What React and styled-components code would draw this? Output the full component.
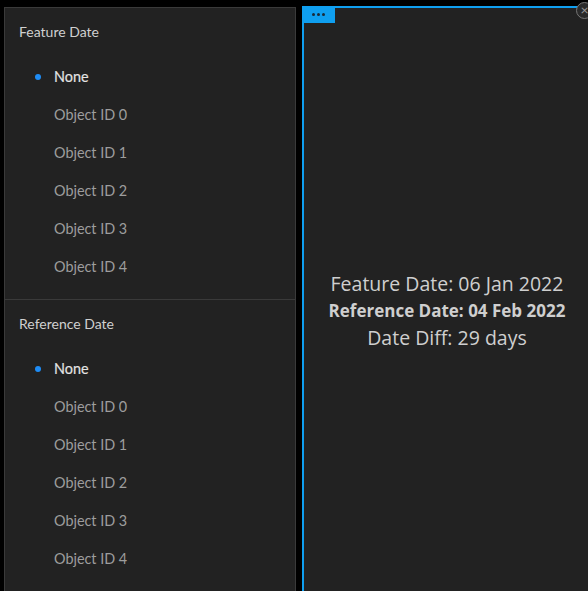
import React from 'react';
import styled, { createGlobalStyle } from 'styled-components';

const options = ['None', 'Object ID 0', 'Object ID 1', 'Object ID 2', 'Object ID 3', 'Object ID 4'];

const sections = [
  { title: 'Feature Date', selected: 'None' },
  { title: 'Reference Date', selected: 'None' },
];

export default function App() {
  return (
    <>
      <GlobalStyle />
      <Page>
        <SettingsPanel>
          {sections.map((section, i) => (
            <Section key={section.title} divided={i > 0}>
              <SectionTitle>{section.title}</SectionTitle>
              <OptionList>
                {options.map(opt => (
                  <Option key={opt} active={opt === section.selected}>
                    {opt}
                  </Option>
                ))}
              </OptionList>
            </Section>
          ))}
        </SettingsPanel>
        <Widget>
          <WidgetTab>
            <Dot />
            <Dot />
            <Dot />
          </WidgetTab>
          <CloseButton>×</CloseButton>
          <Summary>
            <Line>Feature Date: 06 Jan 2022</Line>
            <Line bold>Reference Date: 04 Feb 2022</Line>
            <Line>Date Diff: 29 days</Line>
          </Summary>
        </Widget>
      </Page>
    </>
  );
}

const GlobalStyle = createGlobalStyle`
  html, body {
    margin: 0;
    padding: 0;
    background: #000;
    overflow: hidden;
    font-family: Lato, "Open Sans", sans-serif;
  }
`;

const Page = styled.div`
  display: flex;
  align-items: flex-start;
  gap: 6px;
  padding-left: 4px;
  width: 600px;
  height: 591px;
  overflow: hidden;
`;

const SettingsPanel = styled.div`
  width: 290px;
  height: 640px;
  margin-top: 7px;
  background: #222;
  border: 1px solid #3a3a3a;
  flex-shrink: 0;
`;

const Section = styled.div`
  padding: 14px 14px 13px;
  border-top: ${p => (p.divided ? '1px solid #3a3a3a' : 'none')};
`;

const SectionTitle = styled.div`
  font-size: 14px;
  line-height: 20px;
  color: #d0d0d0;
`;

const OptionList = styled.ul`
  list-style: none;
  margin: 16px 0 0 0;
  padding: 0;
`;

const Option = styled.li`
  position: relative;
  height: 38px;
  line-height: 38px;
  padding-left: 35px;
  font-size: 14.4px;
  color: ${p => (p.active ? '#e4e4e4' : '#9d9d9d')};
  -webkit-text-stroke: ${p => (p.active ? '0.15px #e4e4e4' : '0')};

  &::before {
    content: '';
    display: ${p => (p.active ? 'block' : 'none')};
    position: absolute;
    left: 16px;
    top: 16px;
    width: 6px;
    height: 6px;
    border-radius: 50%;
    background: #1e8cf5;
  }
`;

const Widget = styled.div`
  position: relative;
  width: 288px;
  height: 604px;
  margin-top: 6px;
  background: #222;
  border: 2px solid #0f9ff0;
  border-right: none;
  display: flex;
  align-items: center;
  justify-content: center;
  flex-shrink: 0;
`;

const WidgetTab = styled.div`
  position: absolute;
  left: -2px;
  top: -2px;
  width: 33px;
  height: 17px;
  background: #0f9ff0;
  display: flex;
  align-items: center;
  justify-content: center;
  gap: 2px;
  padding-bottom: 1px;
  box-sizing: border-box;
`;

const Dot = styled.span`
  width: 3px;
  height: 3px;
  border-radius: 50%;
  background: #1a2a38;
`;

const CloseButton = styled.div`
  position: absolute;
  top: -6px;
  right: -1px;
  width: 15px;
  height: 15px;
  border-radius: 50%;
  border: 1px solid #777;
  background: #2a2a2a;
  color: #999;
  font-size: 14px;
  line-height: 14px;
  text-align: center;
`;

const Summary = styled.div`
  display: flex;
  flex-direction: column;
  align-items: center;
  color: #cfcfcf;
  margin-right: 2px;
  font-family: "Open Sans", Lato, sans-serif;
`;

const Line = styled.div`
  font-size: ${p => (p.bold ? '17px' : '19.5px')};
  font-weight: ${p => (p.bold ? 700 : 400)};
  line-height: 27px;
  white-space: nowrap;
`;
